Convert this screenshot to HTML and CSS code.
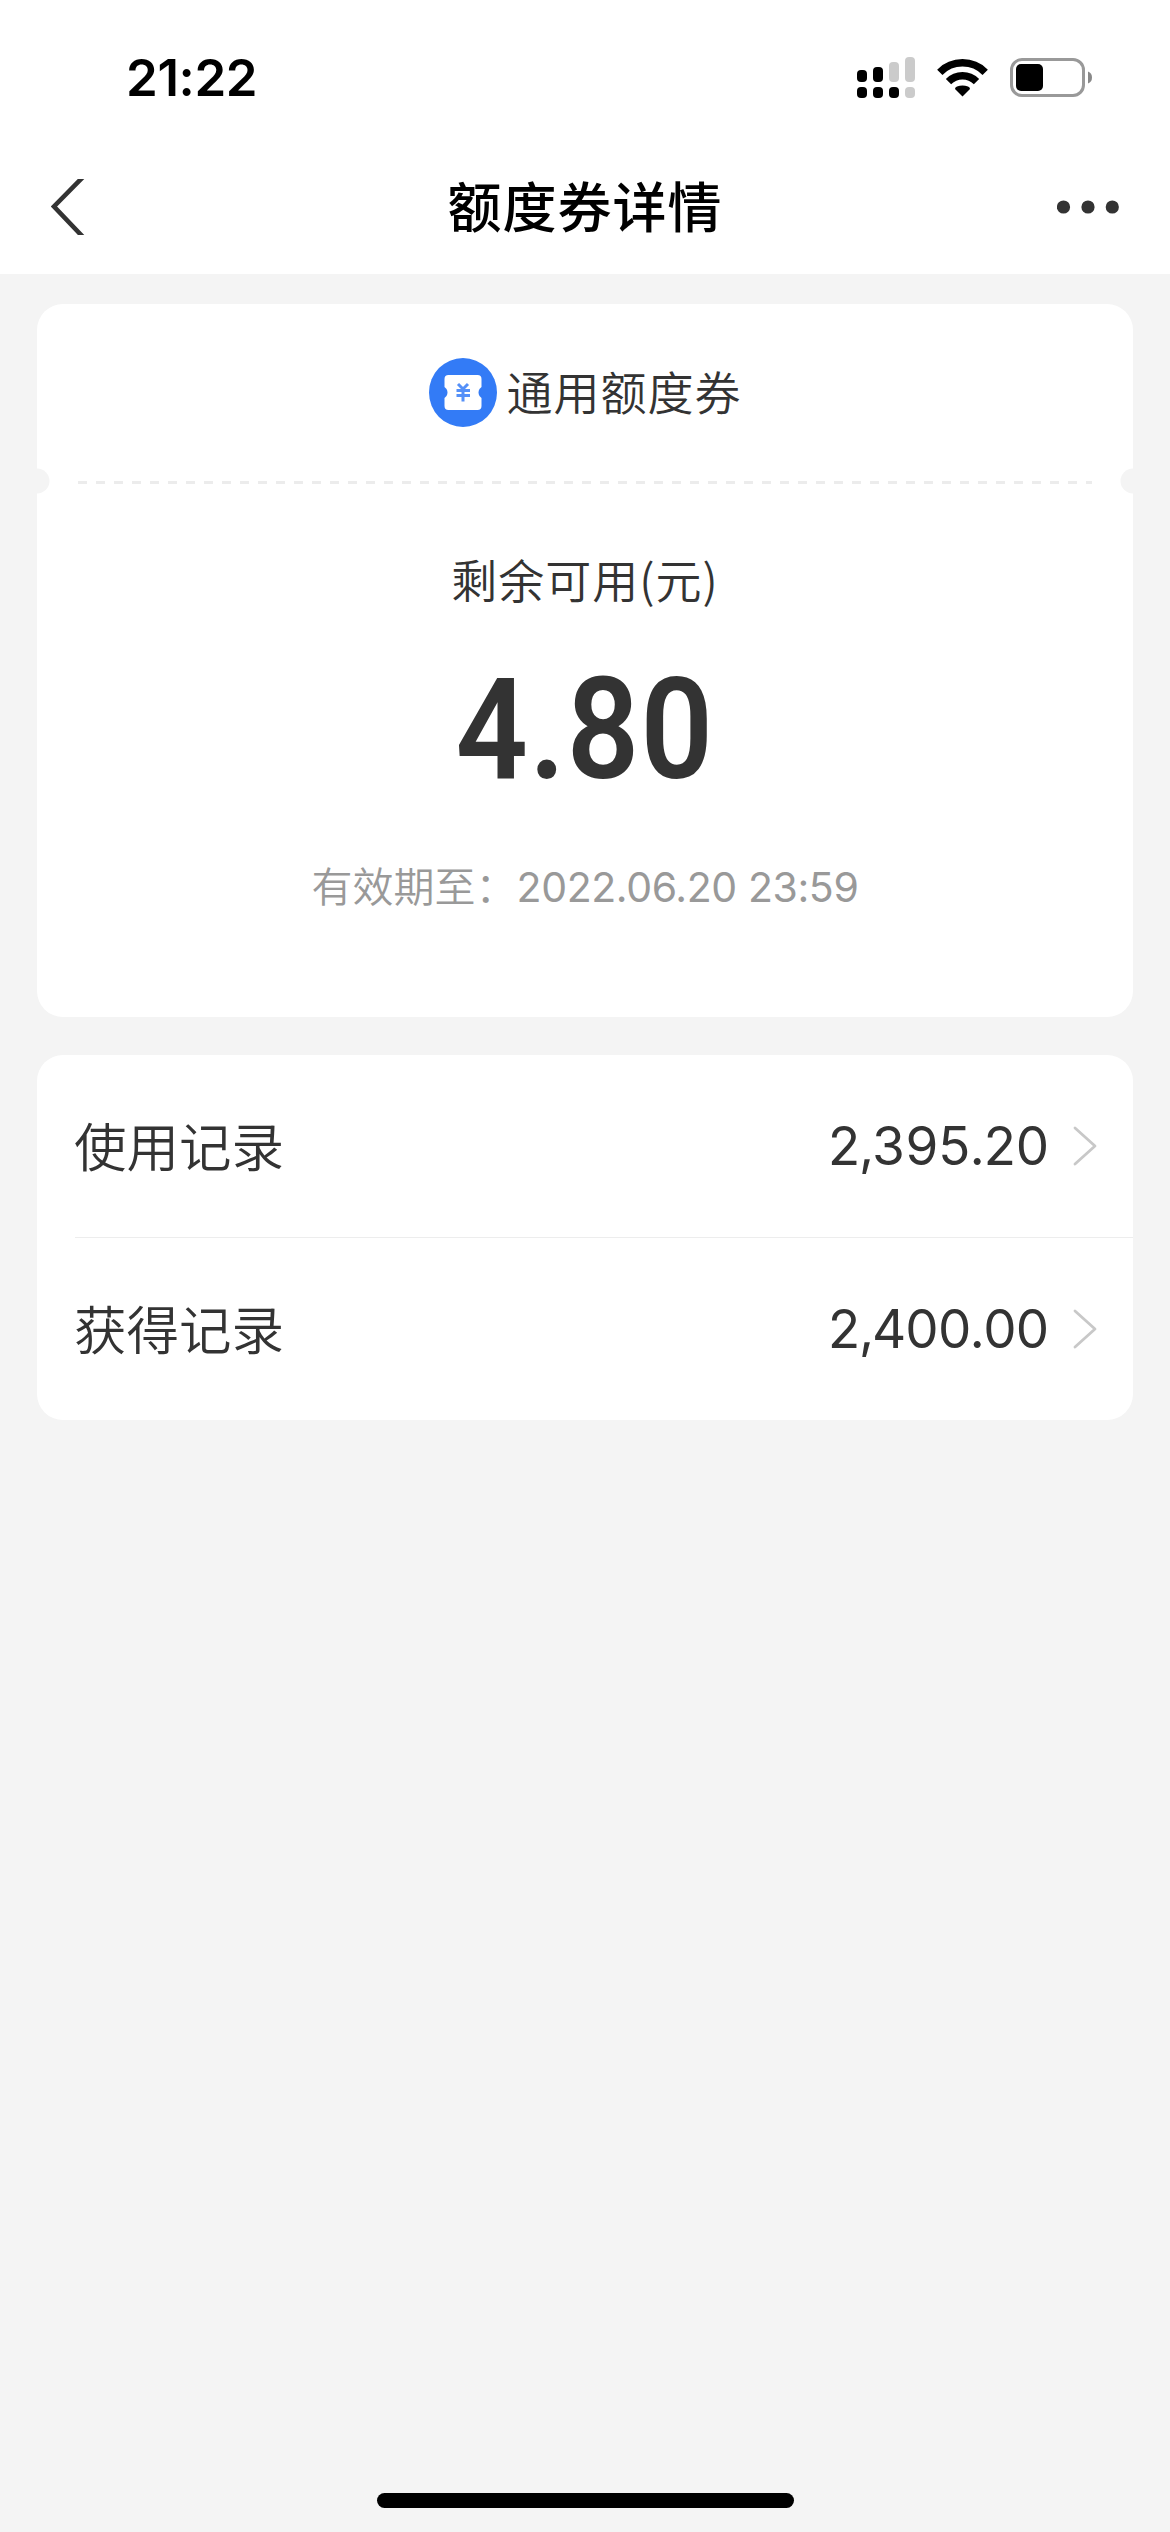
FILE: index.html
```html
<!DOCTYPE html>
<html lang="zh-CN">
<head>
<meta charset="utf-8">
<title>额度券详情</title>
<link rel="stylesheet" href="styles.css">
</head>
<body>
<div class="screen">
  <header class="top">
    <div class="status">
      <span class="time">21:22</span>
      <div class="indicators">
        <svg class="signal" width="58" height="42" viewBox="0 0 58 42">
          <g fill="#000">
            <rect x="0" y="13" width="10" height="12" rx="4"/>
            <rect x="16" y="10" width="10" height="15" rx="4"/>
            <rect x="0" y="30" width="10" height="11" rx="4"/>
            <rect x="16" y="30" width="10" height="11" rx="4"/>
            <rect x="32" y="30" width="10" height="11" rx="4"/>
          </g>
          <g fill="#cbcbcb">
            <rect x="32" y="5" width="10" height="20" rx="4"/>
            <rect x="48" y="0" width="10" height="25" rx="4"/>
            <rect x="48" y="30" width="10" height="11" rx="4"/>
          </g>
        </svg>
        <svg class="wifi" width="51" height="38" viewBox="0 0 51 38">
          <path d="M2.800 13.300A32 32 0 0 1 48.200 13.300" fill="none" stroke="#000" stroke-width="7.500"/>
          <path d="M11.500 22.600A19.800 19.800 0 0 1 39.500 22.600" fill="none" stroke="#000" stroke-width="7.500"/>
          <path d="M25.500 37.500L18 30Q18 28.500 20 27.600Q25.500 25.200 31 27.600Q33 28.500 33 30Z" fill="#000"/>
        </svg>
        <svg class="battery" width="83" height="40" viewBox="0 0 83 40">
          <rect x="1.500" y="1.500" width="72" height="36" rx="10.500" fill="none" stroke="#999" stroke-width="3"/>
          <rect x="6" y="6" width="27" height="27" rx="5" fill="#000"/>
          <path d="M78 13.500Q82 15 82 19.500T78 25.500Z" fill="#888"/>
        </svg>
      </div>
    </div>
    <nav class="nav">
      <svg class="back" width="34" height="56" viewBox="0 0 34 56">
        <path d="M32 -2L3 27.500L32 58" fill="none" stroke="#333" stroke-width="4.600"/>
      </svg>
      <h1 class="title">额度券详情</h1>
      <svg class="more" width="62" height="14" viewBox="0 0 62 14">
        <g fill="#333"><circle cx="6.500" cy="7" r="6.600"/><circle cx="31" cy="7" r="6.600"/><circle cx="55.300" cy="7" r="6.600"/></g>
      </svg>
    </nav>
  </header>
  <main class="content">
    <section class="card coupon">
      <div class="coupon-head">
        <svg class="coupon-icon" width="68" height="69" viewBox="0 0 68 69">
          <ellipse cx="34" cy="34.500" rx="34" ry="34.500" fill="#337bf6"/>
          <path d="M19.500 17H48.500Q52.500 17 52.500 21V29L50.500 31Q48.500 34.500 50.500 38L52.500 40V48Q52.500 52 48.500 52H19.500Q15.500 52 15.500 48V40L17.500 38Q19.500 34.500 17.500 31L15.500 29V21Q15.500 17 19.500 17Z" fill="#fff"/>
          <path d="M29 26L34 31L39 26M34 31V43.500M27.500 32.500H41M27.500 37.500H41" fill="none" stroke="#5590f8" stroke-width="3"/>
        </svg>
        <span class="coupon-name">通用额度券</span>
      </div>
      <svg class="tear" width="1096" height="26" viewBox="0 0 1096 26">
        <circle cx="0" cy="13" r="12.500" fill="#f4f4f4"/>
        <circle cx="1096" cy="13" r="12.500" fill="#f4f4f4"/>
        <path d="M41 14.500H1055" stroke="#ececec" stroke-width="3" stroke-dasharray="9 9"/>
      </svg>
      <div class="coupon-body">
        <p class="caption">剩余可用(元)</p>
        <p class="amount">4.80</p>
        <p class="expiry">有效期至：<span class="date">2022.06.20 23:59</span></p>
      </div>
    </section>
    <section class="card records">
      <a class="row">
        <span class="label">使用记录</span>
        <span class="value">2,395.20</span>
        <svg class="arrow" width="24" height="40" viewBox="0 0 24 40"><path d="M2 2L22 20L2 38" fill="none" stroke="#c8c8c8" stroke-width="2.800" stroke-linecap="round" stroke-linejoin="round"/></svg>
      </a>
      <div class="divider"></div>
      <a class="row">
        <span class="label">获得记录</span>
        <span class="value">2,400.00</span>
        <svg class="arrow" width="24" height="40" viewBox="0 0 24 40"><path d="M2 2L22 20L2 38" fill="none" stroke="#c8c8c8" stroke-width="2.800" stroke-linecap="round" stroke-linejoin="round"/></svg>
      </a>
    </section>
  </main>
  <div class="home-bar"></div>
</div>
</body>
</html>
```

FILE: styles.css
```css
* { box-sizing: border-box; margin: 0; padding: 0; }
body { background: #f4f4f4; font-family: "Noto Sans CJK SC", sans-serif; font-weight: 350; color: #333; }
svg { display: block; flex: none; }
.screen { width: 1170px; height: 2532px; display: flex; flex-direction: column; align-items: center; overflow: hidden; }
.top { width: 100%; height: 274px; background: #fff; }
.status { height: 140px; padding: 0 77px 0 126px; display: flex; justify-content: space-between; }
.time { font: 600 51px/60px Inter, sans-serif; color: #000; margin-top: 48px; letter-spacing: -0.4px; }
.indicators { display: flex; align-items: flex-start; }
.signal { margin: 57px 22px 0 0; }
.wifi { margin: 59px 22px 0 0; }
.battery { margin-top: 58px; }
.nav { height: 134px; padding: 0 51px; display: grid; grid-template-columns: 1fr auto 1fr; align-items: center; }
.more { justify-self: end; }
.title { font-size: 54px; font-weight: 500; line-height: 80px; letter-spacing: 1px; color: #000; padding-bottom: 5px; }
.content { width: 1096px; margin-top: 30px; display: flex; flex-direction: column; gap: 38px; }
.card { background: #fff; border-radius: 26px; }
.coupon { height: 713px; display: flex; flex-direction: column; }
.coupon-head { height: 164px; padding-top: 13px; display: flex; align-items: center; justify-content: center; gap: 10px; }
.coupon-name { font-size: 46px; line-height: 68px; letter-spacing: 1px; padding-bottom: 5px; }
.coupon-body { display: flex; flex-direction: column; align-items: center; }
.caption { font-size: 46px; line-height: 68px; letter-spacing: 1px; margin-top: 50px; }
.amount { font: 600 141px/150px Roboto, sans-serif; letter-spacing: 1.5px; margin-top: 43px; transform: scaleX(.9); }
.expiry { font-size: 41px; line-height: 60px; color: #999; margin-top: 49px; white-space: pre; }
.date { font-family: Inter, sans-serif; font-size: 41px; font-weight: 400; letter-spacing: -0.4px; }
.records { height: 365px; }
.row { height: 182px; padding: 0 36px 0 37px; display: flex; align-items: center; }
.label { flex: 1; font-size: 52.500px; line-height: 76px; padding-bottom: 5px; }
.value { font: 375 53px/76px Inter, sans-serif; font-variant-numeric: tabular-nums; letter-spacing: -1.7px; margin-right: 25px; }
.divider { height: 1px; margin-left: 38px; background: #ededed; }
.home-bar { width: 417px; height: 15px; border-radius: 8px; background: #000; margin: auto 0 24px; }
```
